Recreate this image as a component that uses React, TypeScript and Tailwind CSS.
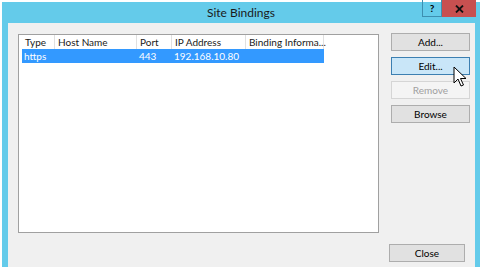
import React from 'react'

const font = { fontFamily: 'Lato, "Open Sans", sans-serif' }

function Btn({ label, variant }: { label: string; variant?: 'hover' | 'disabled' }) {
  const cls =
    variant === 'hover'
      ? 'bg-[#c9e6f8] border-[#3c7fb1] text-black'
      : variant === 'disabled'
      ? 'bg-[#f4f4f4] border-[#d5d5d5] text-[#a0a0a0]'
      : 'bg-[#e1e1e1] border-[#adadad] text-black'
  return (
    <div className={`h-[18px] w-[79px] border flex items-center justify-center text-[10px] ${cls}`}>
      {label}
    </div>
  )
}

export default function App() {
  const cols = [
    { name: 'Type', w: 'w-[33px]' },
    { name: 'Host Name', w: 'w-[82px]' },
    { name: 'Port', w: 'w-[35px]' },
    { name: 'IP Address', w: 'w-[74px]' },
    { name: 'Binding Informa...', w: 'w-[78px]' },
  ]
  const row = ['https', '', '443', '192.168.10.80', '']

  return (
    <div className="w-[487px] h-[275px] bg-white pt-[2px] pl-[2px]" style={font}>
      <div className="w-[478px] h-[265px] bg-[#64cbea] flex flex-col relative">
        {/* title bar */}
        <div className="h-[21px] flex items-center justify-center text-[12px] text-[#1a1a1a] relative">
          Site Bindings
          <div className="absolute right-[4px] top-[-2px] flex">
            <div className="w-[20px] h-[17px] border border-[#3d8fb0] border-t-0 flex items-center justify-center text-[10px] font-bold text-black">
              ?
            </div>
            <div className="w-[34px] h-[17px] bg-[#c75050] flex items-center justify-center">
              <svg width="9" height="8" viewBox="0 0 9 8">
                <path d="M1 0.5 L8 7.5 M8 0.5 L1 7.5" stroke="#111" strokeWidth="1.8" />
              </svg>
            </div>
          </div>
        </div>
        {/* body */}
        <div className="flex-1 ml-[6px] mr-[5px] bg-[#f0f0f0] flex flex-col pl-[10px] pt-[11px]">
          <div className="flex">
            <div className="w-[361px] h-[199px] bg-white border border-[#a0a0a0] pl-[3px]">
              <div className="flex h-[14px] text-[10px] text-[#1a1a1a]">
                {cols.map((c) => (
                  <div key={c.name} className={`${c.w} border-r border-[#e0e0e0] pl-[3px] leading-[14px] whitespace-nowrap`}>
                    {c.name}
                  </div>
                ))}
              </div>
              <div className="flex h-[14px] w-[302px] bg-[#3399ff] text-[10px] text-white">
                {cols.map((c, i) => (
                  <div key={c.name} className={`${c.w} pl-[2px] leading-[14px] whitespace-nowrap`}>
                    {row[i]}
                  </div>
                ))}
              </div>
            </div>
            <div className="ml-[12px] mt-[-1px] flex flex-col gap-[6px]">
              <Btn label="Add..." />
              <Btn label="Edit..." variant="hover" />
              <Btn label="Remove" variant="disabled" />
              <Btn label="Browse" />
            </div>
          </div>
          <div className="flex justify-end mt-[11px] mr-[10px]">
            <div className="h-[18px] w-[76px] border border-[#adadad] bg-[#e1e1e1] flex items-center justify-center text-[10px]">
              Close
            </div>
          </div>
        </div>
        {/* cursor */}
        <svg className="absolute left-[451px] top-[64px]" width="14" height="22" viewBox="0 0 14 22">
          <path d="M1 1 L1 17 L5 13 L8 20 L10.5 19 L7.5 12.5 L13 12.5 Z" fill="white" stroke="black" strokeWidth="1" strokeLinejoin="round" />
        </svg>
      </div>
    </div>
  )
}
